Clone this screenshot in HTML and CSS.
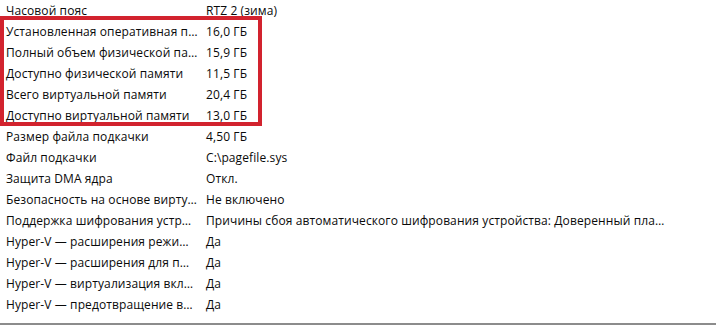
FILE: index.html
```html
<!DOCTYPE html>
<html lang="ru">
<head>
    <meta charset="utf-8">
    <link rel="stylesheet" href="styles.css">
</head>
<body>
    <div class="list">
        <div class="row"><div class="name">Часовой пояс</div><div class="value">RTZ 2 (зима)</div></div>
        <div class="row"><div class="name">Установленная оперативная п…</div><div class="value">16,0 ГБ</div></div>
        <div class="row"><div class="name">Полный объем физической па…</div><div class="value">15,9 ГБ</div></div>
        <div class="row"><div class="name">Доступно физической памяти</div><div class="value">11,5 ГБ</div></div>
        <div class="row"><div class="name">Всего виртуальной памяти</div><div class="value">20,4 ГБ</div></div>
        <div class="row"><div class="name">Доступно виртуальной памяти</div><div class="value">13,0 ГБ</div></div>
        <div class="row"><div class="name">Размер файла подкачки</div><div class="value">4,50 ГБ</div></div>
        <div class="row"><div class="name">Файл подкачки</div><div class="value">C:\pagefile.sys</div></div>
        <div class="row"><div class="name">Защита DMA ядра</div><div class="value">Откл.</div></div>
        <div class="row"><div class="name">Безопасность на основе вирту…</div><div class="value">Не включено</div></div>
        <div class="row"><div class="name">Поддержка шифрования устр…</div><div class="value">Причины сбоя автоматического шифрования устройства: Доверенный пла…</div></div>
        <div class="row"><div class="name">Hyper-V — расширения режи…</div><div class="value">Да</div></div>
        <div class="row"><div class="name">Hyper-V — расширения для п…</div><div class="value">Да</div></div>
        <div class="row"><div class="name">Hyper-V — виртуализация вкл…</div><div class="value">Да</div></div>
        <div class="row"><div class="name">Hyper-V — предотвращение в…</div><div class="value">Да</div></div>

        <div class="highlight"></div>
    </div>
</body>
</html>
```

FILE: styles.css
```css
body
{
    margin: 0;
    background: #ffffff;
    font-family: "Open Sans", "Noto Sans", sans-serif;
    font-size: 12px;
    letter-spacing: 0.1px;
    color: #0a0a0a;
}

.list
{
    position: relative;
    height: 323px;
    border-bottom: 2px solid #8c8c8c;
}

.row
{
    display: flex;
    align-items: center;
    height: 21px;
    white-space: nowrap;
}

.name
{
    width: 200px;
    padding-left: 6px;
    overflow: hidden;
    text-overflow: ellipsis;
}

.highlight
{
    position: absolute;
    left: 0;
    top: 16px;
    width: 254px;
    height: 102px;
    border: 4px solid #d2232e;
}
```
